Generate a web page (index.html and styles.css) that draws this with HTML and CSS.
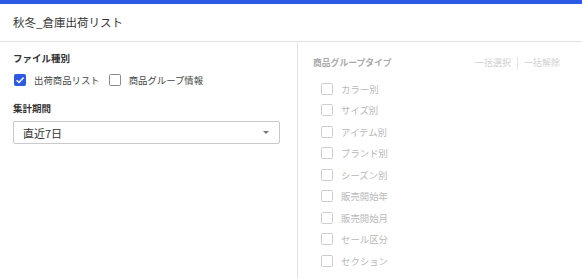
FILE: index.html
```html
<!DOCTYPE html>
<html lang="ja">
<head>
<meta charset="utf-8">
<link rel="stylesheet" href="styles.css">
</head>
<body>
<div class="topbar"></div>
<header class="header"><h1 class="title">秋冬_倉庫出荷リスト</h1></header>
<main class="main">
  <section class="left">
    <div class="label">ファイル種別</div>
    <div class="check-row">
      <label class="check"><span class="box checked"><svg viewBox="0 0 12 12" width="12" height="12"><path d="M2.6 6.2 L5 8.5 L9.6 3.6" fill="none" stroke="#fff" stroke-width="1.5"/></svg></span><span class="check-text">出荷商品リスト</span></label>
      <label class="check"><span class="box"></span><span class="check-text">商品グループ情報</span></label>
    </div>
    <div class="label label-period">集計期間</div>
    <div class="select"><span class="select-value">直近7日</span><span class="caret"></span></div>
  </section>
  <section class="right">
    <div class="right-head">
      <div class="label label-dim">商品グループタイプ</div>
      <div class="bulk"><span>一括選択</span><span class="sep"></span><span>一括解除</span></div>
    </div>
    <ul class="list">
      <li class="check dim"><span class="box"></span><span class="check-text">カラー別</span></li>
      <li class="check dim"><span class="box"></span><span class="check-text">サイズ別</span></li>
      <li class="check dim"><span class="box"></span><span class="check-text">アイテム別</span></li>
      <li class="check dim"><span class="box"></span><span class="check-text">ブランド別</span></li>
      <li class="check dim"><span class="box"></span><span class="check-text">シーズン別</span></li>
      <li class="check dim"><span class="box"></span><span class="check-text">販売開始年</span></li>
      <li class="check dim"><span class="box"></span><span class="check-text">販売開始月</span></li>
      <li class="check dim"><span class="box"></span><span class="check-text">セール区分</span></li>
      <li class="check dim"><span class="box"></span><span class="check-text">セクション</span></li>
    </ul>
  </section>
</main>
</body>
</html>
```

FILE: styles.css
```css
* { box-sizing: border-box; }
html, body { margin: 0; padding: 0; background: #fff; }
body {
  font-family: "Noto Sans CJK JP", "Noto Sans", sans-serif;
  color: #333;
  width: 582px;
  height: 278px;
  overflow: hidden;
}
.topbar { height: 4px; background: #2d5ae4; }
.header {
  height: 38px;
  display: flex;
  align-items: center;
  padding-left: 13px;
  border-bottom: 1px solid #e2e2e2;
}
.title { margin: 0; font-size: 11.5px; font-weight: 400; color: #333; line-height: 14px; padding-bottom: 1px; }
.main {
  display: grid;
  grid-template-columns: 297px 1fr;
  height: 236px;
}
.left { padding: 9px 17px 0 13px; }
.label { font-size: 9.5px; font-weight: 700; line-height: 14px; color: #333; }
.check-row { display: flex; gap: 8px; margin-top: 8px; height: 14px; align-items: center; }
.check { display: flex; align-items: center; gap: 8px; font-size: 9.4px; line-height: 14px; color: #444; }
.box {
  width: 12px; height: 12px;
  border: 1px solid #8a8a8a;
  border-radius: 1.5px;
  margin-left: 1px;
  display: inline-flex;
  flex: none;
}
.box.checked { background: #2d5ae4; border-color: #2d5ae4; }
.box.checked svg { margin: -1px; }
.label-period { margin-top: 14px; }
.select {
  margin-top: 6px;
  height: 23px;
  width: 267px;
  border: 1px solid #c9c9c9;
  border-radius: 2px;
  display: flex;
  align-items: center;
  justify-content: space-between;
  padding: 0 10px 0 9px;
}
.select-value { font-size: 11px; color: #333; line-height: 14px; }
.caret {
  width: 0; height: 0;
  border-left: 3.5px solid transparent;
  border-right: 3.5px solid transparent;
  border-top: 3.5px solid #777;
}
.right { border-left: 1px solid #e2e2e2; padding: 14px 22px 0 15px; }
.right-head { display: flex; justify-content: space-between; align-items: center; height: 14px; }
.label-dim { color: #a9a9a9; font-size: 8.8px; }
.bulk { display: flex; align-items: center; gap: 6px; font-size: 9px; color: #cfcfcf; line-height: 14px; }
.sep { width: 1px; height: 13px; background: #e4e4e4; }
.list { list-style: none; margin: 8px 0 0; padding: 0 0 0 7px; }
.list .check { height: 21.5px; }
.dim { color: #b8b8b8; }
.dim .box { border-color: #cdcdcd; }
```
